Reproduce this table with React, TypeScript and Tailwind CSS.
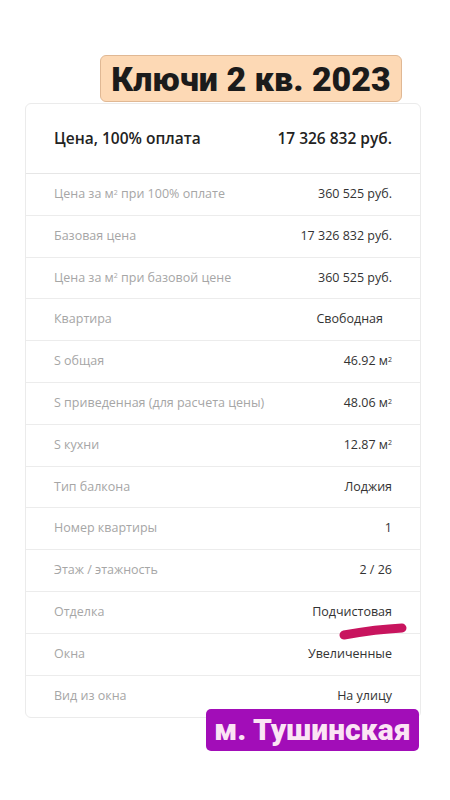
import React from 'react'

const rows: { label: React.ReactNode; value: React.ReactNode; extra?: string }[] = [
  { label: <>Цена за м<sup className="text-[7px]">2</sup> при 100% оплате</>, value: '360 525 руб.' },
  { label: 'Базовая цена', value: '17 326 832 руб.' },
  { label: <>Цена за м<sup className="text-[7px]">2</sup> при базовой цене</>, value: '360 525 руб.' },
  { label: 'Квартира', value: 'Свободная', extra: 'pr-[9px]' },
  { label: 'S общая', value: <>46.92 м<sup className="text-[7px]">2</sup></> },
  { label: 'S приведенная (для расчета цены)', value: <>48.06 м<sup className="text-[7px]">2</sup></> },
  { label: 'S кухни', value: <>12.87 м<sup className="text-[7px]">2</sup></> },
  { label: 'Тип балкона', value: 'Лоджия' },
  { label: 'Номер квартиры', value: '1' },
  { label: 'Этаж / этажность', value: '2 / 26' },
  { label: 'Отделка', value: 'Подчистовая' },
  { label: 'Окна', value: 'Увеличенные' },
  { label: 'Вид из окна', value: 'На улицу' },
]

export default function App() {
  return (
    <div className="relative w-[450px] h-[800px] bg-white overflow-hidden font-['Open_Sans','Noto_Sans',sans-serif]">
      {/* flat card */}
      <div className="ml-[25px] mt-[103px] w-[396px] rounded-[6px] border border-[#ebebeb] bg-white">
        <div className="flex items-center justify-between h-[70px] pl-[28px] pr-[28px] border-b border-[#e6e6e6]">
          <span className="text-[15.5px] font-semibold text-[#222]">Цена, 100% оплата</span>
          <span className="text-[15.5px] font-semibold text-[#222]">17 326 832 руб.</span>
        </div>
        {rows.map((r, i) => (
          <div
            key={i}
            className={`flex items-center justify-between h-[41.8px] pl-[28px] pr-[28px] text-[12.5px] ${i < rows.length - 1 ? 'border-b border-[#ececec]' : ''}`}
          >
            <span className="text-[#a6a6a6]">{r.label}</span>
            <span className={`text-[#333] ${r.extra ?? ''}`}>{r.value}</span>
          </div>
        ))}
      </div>

      {/* sticker: keys date */}
      <div className="absolute left-[100px] top-[55px] w-[302px] h-[47px] rounded-[6px] bg-[#fdd9b5] border border-[#e0b894] flex items-center justify-center">
        <span className="font-['Roboto',sans-serif] font-black text-[34px] leading-none text-[#1b1b1b]">Ключи 2 кв. 2023</span>
      </div>

      {/* marker stroke */}
      <svg className="absolute left-[336px] top-[620px]" width="74" height="22" viewBox="0 0 74 22">
        <path d="M8 15 C 25 12, 45 9, 66 8" stroke="#c8145e" strokeWidth="9" strokeLinecap="round" fill="none" />
      </svg>

      {/* sticker: metro */}
      <div className="absolute left-[206px] top-[709px] w-[213px] h-[42px] rounded-[5px] bg-[#a20db8] flex items-center justify-center">
        <span className="font-['Roboto',sans-serif] font-black text-[30px] leading-none text-[#fbe4f4]">м. Тушинская</span>
      </div>
    </div>
  )
}
